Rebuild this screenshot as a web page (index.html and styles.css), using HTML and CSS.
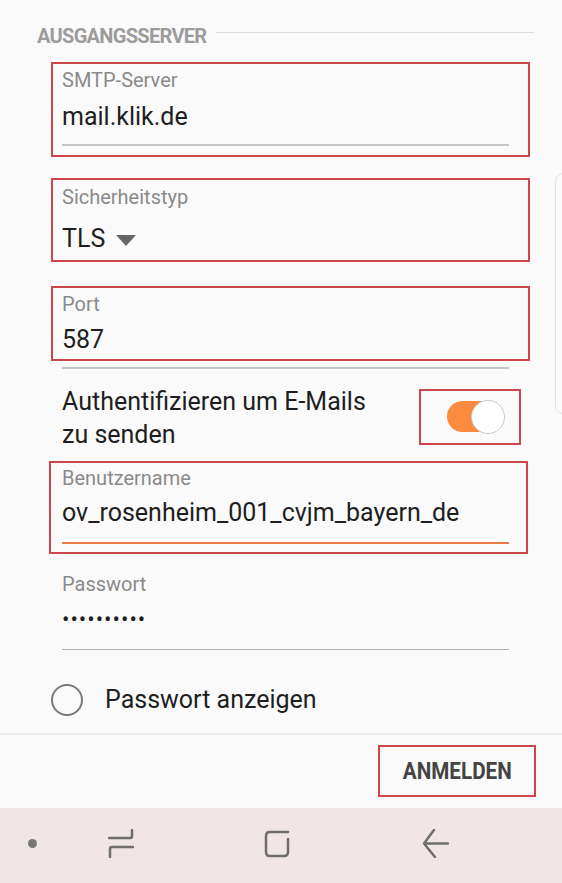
FILE: index.html
```html
<!DOCTYPE html>
<html>
<head>
  <title>Ausgangsserver</title>
  <link rel="stylesheet" href="styles.css">
</head>
<body>
  <div class="screen">
    <div class="scroll-handle"></div>

    <div class="content">
      <div class="section-title">
        <span>AUSGANGSSERVER</span>
        <div class="title-line"></div>
      </div>

      <div class="field marked smtp">
        <div class="label">SMTP-Server</div>
        <div class="value">mail.klik.de</div>
        <div class="underline"></div>
      </div>

      <div class="field marked security">
        <div class="label">Sicherheitstyp</div>
        <div class="value select">TLS <span class="caret"></span></div>
      </div>

      <div class="field marked port">
        <div class="label">Port</div>
        <div class="value">587</div>
      </div>
      <div class="underline port-line"></div>

      <div class="switch-row">
        <div class="switch-text">Authentifizieren um E-Mails zu senden</div>
        <div class="switch-mark">
          <div class="switch">
            <div class="track"></div>
            <div class="knob"></div>
          </div>
        </div>
      </div>

      <div class="field marked user">
        <div class="label">Benutzername</div>
        <div class="value">ov_rosenheim_001_cvjm_bayern_de</div>
        <div class="underline active"></div>
      </div>

      <div class="field plain password">
        <div class="label">Passwort</div>
        <div class="value dots">••••••••••</div>
        <div class="underline thin"></div>
      </div>

      <div class="radio-row">
        <span class="radio"></span>
        <span class="radio-text">Passwort anzeigen</span>
      </div>
    </div>

    <div class="action-bar">
      <button class="login"><span>ANMELDEN</span></button>
    </div>

    <div class="nav-bar">
      <span class="nav-dot"></span>
      <svg class="nav-recent" width="26" height="29" viewBox="0 0 26 29">
        <path d="M24 1 V7 Q24 9 22 9 H1" />
        <path d="M25 18 H4 Q2 18 2 20 V28" />
      </svg>
      <svg class="nav-home" width="27" height="28" viewBox="0 0 27 28">
        <path d="M24 2 H6 Q2 2 2 6 V22 Q2 26 6 26 H20 Q24 26 24 22 V9" />
      </svg>
      <svg class="nav-back" width="27" height="29" viewBox="0 0 27 29">
        <path d="M12 1 L2 14.5 L13 28" />
        <path d="M4 14.5 H26" />
      </svg>
    </div>
  </div>
</body>
</html>
```

FILE: styles.css
```css
body {
  margin: 0;
  background-color: #fafafa;
  font-family: Roboto, "Noto Sans", sans-serif;
  color: #202020;
}
.screen {
  position: relative;
  width: 562px;
  height: 883px;
  overflow: hidden;
  display: flex;
  flex-direction: column;
}
.scroll-handle {
  position: absolute;
  left: 555px;
  top: 173px;
  width: 24px;
  height: 239px;
  border: 1px solid #e3e3e3;
  border-radius: 8px;
}
.content {
  height: 733px;
  padding-top: 24px;
  box-sizing: border-box;
}
.section-title {
  display: flex;
  align-items: flex-start;
  height: 24px;
  padding-left: 37px;
  font-weight: bold;
  font-size: 20px;
  line-height: 24px;
  letter-spacing: -0.7px;
  color: #9c9c9c;
}
.title-line {
  flex: 1;
  height: 1px;
  margin: 8px 28px 0 10px;
  background-color: #dcdcdc;
}
.field {
  box-sizing: border-box;
  width: 479px;
}
.marked {
  border: 2px solid #cc474c;
}
.label {
  font-size: 20px;
  line-height: 24px;
  color: #8a8a8a;
}
.value {
  font-size: 25px;
  line-height: 30px;
  color: #1e1e1e;
}
.underline {
  width: 447px;
  height: 2px;
  background-color: #c6c6c6;
}
.underline.active {
  background-color: #ec7a45;
}
.underline.thin {
  height: 1px;
  background-color: #b4b4b4;
}
.smtp {
  margin: 14px 0 0 51px;
  padding: 4px 0 9px 9px;
}
.smtp .value {
  margin-top: 10px;
}
.smtp .underline {
  margin-top: 12px;
}
.security {
  margin: 21px 0 0 51px;
  padding: 5px 0 6px 9px;
}
.security .value {
  margin-top: 15px;
}
.select {
  display: flex;
  align-items: center;
}
.caret {
  width: 0;
  height: 0;
  margin: 2px 0 0 11px;
  border-left: 10px solid transparent;
  border-right: 10px solid transparent;
  border-top: 11px solid #666;
}
.port {
  margin: 24px 0 0 51px;
  padding: 4px 0 4px 9px;
}
.port .value {
  margin-top: 9px;
}
.port-line {
  margin: 6px 0 0 62px;
}
.switch-row {
  display: flex;
  align-items: flex-start;
  height: 66px;
  margin-top: 16px;
  padding-left: 62px;
}
.switch-text {
  width: 330px;
  font-size: 25px;
  line-height: 33px;
  color: #1e1e1e;
}
.switch-mark {
  box-sizing: border-box;
  width: 102px;
  height: 56px;
  margin: 4px 0 0 27px;
  border: 2px solid #cc474c;
  display: flex;
  align-items: center;
}
.switch {
  position: relative;
  width: 58px;
  height: 34px;
  margin-left: 26px;
}
.track {
  width: 48px;
  height: 31px;
  margin-top: 1px;
  border-radius: 16px;
  background-color: #fc8b3f;
}
.knob {
  position: absolute;
  top: 0;
  right: 0;
  box-sizing: border-box;
  width: 34px;
  height: 34px;
  border-radius: 50%;
  background-color: #fff;
  border: 1.5px solid #c9c9c9;
}
.user {
  margin: 10px 0 0 49px;
  padding: 3px 0 8px 11px;
}
.user .value {
  margin-top: 8px;
}
.user .underline {
  margin-top: 14px;
}
.password {
  margin-top: 18px;
  padding-left: 62px;
}
.dots {
  margin-top: 9px;
  font-size: 22px;
  letter-spacing: 1px;
}
.password .underline {
  margin-top: 14px;
}
.radio-row {
  display: flex;
  align-items: center;
  margin-top: 34px;
  padding-left: 51px;
}
.radio {
  box-sizing: border-box;
  width: 32px;
  height: 32px;
  border: 2px solid #7a7a7a;
  border-radius: 50%;
}
.radio-text {
  margin-left: 22px;
  font-size: 25px;
  line-height: 30px;
  color: #1e1e1e;
}
.action-bar {
  display: flex;
  justify-content: flex-end;
  align-items: flex-start;
  height: 75px;
  box-sizing: border-box;
  border-top: 2px solid #ececec;
  padding: 10px 26px 0 0;
}
.login {
  width: 158px;
  height: 52px;
  border: 2px solid #cc474c;
  background: none;
  padding: 0;
  font-family: Roboto, sans-serif;
  font-weight: bold;
  font-size: 24px;
  color: #444;
}
.login span {
  display: inline-block;
  transform: scaleX(0.86);
}
.nav-bar {
  flex: 1;
  display: flex;
  align-items: center;
  padding: 0 0 4px 28px;
  background-color: #f0e6e6;
}
.nav-dot {
  width: 9px;
  height: 9px;
  border-radius: 50%;
  background-color: #777;
}
.nav-bar svg {
  fill: none;
  stroke: #6e6e6e;
  stroke-width: 2.5;
  stroke-linecap: round;
  stroke-linejoin: round;
}
.nav-recent {
  margin-left: 71px;
}
.nav-home {
  margin-left: 130px;
}
.nav-back {
  margin-left: 131px;
}
```
